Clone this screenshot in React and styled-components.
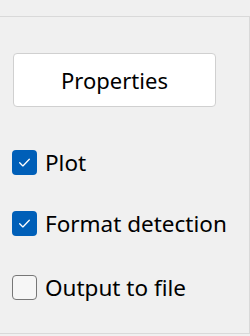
import React, { useState } from 'react';
import styled, { createGlobalStyle } from 'styled-components';

const Global = createGlobalStyle`
body {
  margin:0;
  background:#f0f0f0;
  font-family:"Noto Sans","Open Sans",sans-serif;
}
`;

const Panel = styled.div`
margin-top:16px;
height:318px;
width:250px;
box-sizing:border-box;
border-top:1px solid #d9d9d9;
border-right:1px solid #d9d9d9;
border-bottom:1px solid #d9d9d9;
display:flex;
flex-direction:column;
align-items:flex-start;
padding:36px 0 0 12px;
`;

const Button = styled.button`
margin-left:1px;
width:203px;
height:54px;
background:#fff;
border:1px solid #d0d0d0;
border-radius:4px;
font-family:inherit;
font-size:22px;
color:#000;
padding:0;
`;

const Row = styled.label`
display:flex;
align-items:center;
gap:8px;
margin-top:${p => p.top}px;
font-size:22.5px;
line-height:25px;
color:#000;
cursor:pointer;
`;

const Box = styled.span`
width:25px;
height:25px;
flex:none;
box-sizing:border-box;
border-radius:4px;
display:flex;
align-items:center;
justify-content:center;
background:${p => (p.checked ? '#005fb8' : '#f6f6f6')};
border:${p => (p.checked ? 'none' : '1px solid #777')};
`;

const Check = () => (
  <svg width="15" height="15" viewBox="0 0 14 14">
    <path d="M2.5 7.2 L5.5 10.2 L11.5 4" fill="none" stroke="#fff" strokeWidth="1.2" strokeLinecap="round" strokeLinejoin="round" />
  </svg>
);

const options = [
  { label: 'Plot', checked: true, top: 43 },
  { label: 'Format detection', checked: true, top: 36 },
  { label: 'Output to file', checked: false, top: 39 },
];

export default function App() {
  const [state, setState] = useState(options.map(o => o.checked));
  return (
    <>
      <Global />
      <Panel>
        <Button>Properties</Button>
        {options.map((o, i) => (
          <Row key={o.label} top={o.top} onClick={() => setState(s => s.map((v, j) => (j === i ? !v : v)))}>
            <Box checked={state[i]}>{state[i] && <Check />}</Box>
            {o.label}
          </Row>
        ))}
      </Panel>
    </>
  );
}
